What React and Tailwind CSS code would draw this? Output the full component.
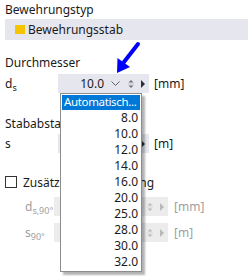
import React from "react";

const font = { fontFamily: '"Noto Sans", "Open Sans", sans-serif' };

function Spin({ disabled }) {
  const c = disabled ? "#b8b8b8" : "#707070";
  const t = disabled ? "#b8b8b8" : "#303030";
  return (
    <div className="flex items-center h-full">
      <svg width="8" height="14" viewBox="0 0 8 14" className="mr-[5px]">
        <path d="M1.5 5.5 L4 3 L6.5 5.5 Z" fill={c} />
        <path d="M1.5 8.5 L4 11 L6.5 8.5 Z" fill={c} />
        <line x1="1" y1="7" x2="7" y2="7" stroke={disabled ? "#d8d8d8" : "#c8c8c8"} strokeWidth="1" />
      </svg>
      <svg width="6" height="10" viewBox="0 0 6 10" className="mr-[3px]">
        <path d="M1 1 L5 5 L1 9 Z" fill={t} />
      </svg>
    </div>
  );
}

function Sub({ children }) {
  return <span className="relative top-[3px] text-[9px] leading-none">{children}</span>;
}

export default function App() {
  const items = ["8.0", "10.0", "12.0", "14.0", "16.0", "20.0", "25.0", "28.0", "30.0", "32.0"];
  return (
    <div className="relative w-[248px] h-[276px] bg-white overflow-hidden text-[12px] text-[#1a1a1a]" style={font}>
      <div className="pl-[5px] pt-[1px] h-[19px] leading-[17px]">Bewehrungstyp</div>
      <div className="ml-[5px] h-[21px] bg-[#e6e6ef] flex items-center pl-[10px]">
        <div className="w-[10px] h-[9px] bg-[#f5c400] mr-[3px]" />
        <span className="leading-[17px]">Bewehrungsstab</span>
      </div>
      <div className="pl-[5px] mt-[13px] h-[19px] leading-[19px]">Durchmesser</div>
      <div className="flex items-center h-[19px] mt-[2px]">
        <div className="w-[58px] pl-[5px] leading-[17px] h-[17px]">
          d<Sub>s</Sub>
        </div>
        <div className="w-[91px] h-full bg-[#e6e6ef] flex items-center justify-end">
          <span className="mr-[7px] leading-[17px]">10.0</span>
          <svg width="9" height="6" viewBox="0 0 9 6" className="mr-[7px]">
            <path d="M0.5 0.5 L4.5 4.5 L8.5 0.5" stroke="#606060" strokeWidth="1" fill="none" />
          </svg>
          <Spin />
        </div>
        <span className="ml-[5px] leading-[17px]">[mm]</span>
      </div>
      <div className="pl-[5px] mt-[21px] h-[19px] leading-[19px]">Stababstand</div>
      <div className="flex items-center h-[19px] mt-[1px]">
        <div className="w-[58px] pl-[5px] leading-[17px] h-[17px]">s</div>
        <div className="w-[91px] h-full bg-[#e6e6ef] flex items-center justify-end">
          <Spin />
        </div>
        <span className="ml-[5px] leading-[17px]">[m]</span>
      </div>
      <div className="flex items-center mt-[23px] pl-[5px] h-[12px]">
        <div className="w-[12px] h-[12px] border border-[#333] mr-[6px] shrink-0" />
        <span className="leading-[17px] whitespace-nowrap">Zusätzliche Bewehrung</span>
      </div>
      <div className="flex items-center h-[19px] mt-[9px] text-[#a0a0a0]">
        <div className="w-[54px] pl-[25px] leading-[17px] h-[17px] whitespace-nowrap">
          d<Sub>s,90°</Sub>
        </div>
        <div className="w-[114px] h-full bg-[#ececec] flex items-center justify-end">
          <Spin disabled />
        </div>
        <span className="ml-[6px] leading-[17px]">[mm]</span>
      </div>
      <div className="flex items-center h-[19px] mt-[7px] text-[#a0a0a0]">
        <div className="w-[54px] pl-[25px] leading-[17px] h-[17px] whitespace-nowrap">
          s<Sub>90°</Sub>
        </div>
        <div className="w-[114px] h-full bg-[#ececec] flex items-center justify-end">
          <Spin disabled />
        </div>
        <span className="ml-[6px] leading-[17px]">[m]</span>
      </div>

      {/* dropdown list */}
      <div className="absolute left-[60px] top-[93px] w-[82px] h-[179px] bg-white border border-[#8c8c8c] shadow-[3px_3px_2px_rgba(0,0,0,0.3)] pt-[1px] px-[1px]">
        <div className="h-[15px] bg-[#0078d7] text-white pl-[2px] text-[11.5px] leading-[14px] tracking-[-0.35px] whitespace-nowrap overflow-hidden">Automatisch...</div>
        {items.map((v) => (
          <div key={v} className="h-[16px] leading-[16px] text-right pr-[2px]">{v}</div>
        ))}
      </div>

      {/* blue arrow */}
      <svg className="absolute left-0 top-0" width="248" height="276" viewBox="0 0 248 276">
        <line x1="138" y1="44" x2="124" y2="62" stroke="#0000ff" strokeWidth="4" strokeLinecap="round" />
        <path d="M117 73 L117.5 58 L130 67 Z" fill="#0000ff" />
      </svg>
    </div>
  );
}
